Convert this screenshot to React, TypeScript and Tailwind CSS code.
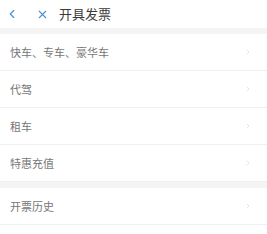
import { ChevronLeft, X, ChevronRight } from "lucide-react";

const groups = [["快车、专车、豪华车", "代驾", "租车", "特惠充值"], ["开票历史"]];

const Row = ({ label }: { label: string }) => (
  <div className="flex h-[37px] items-center justify-between border-b border-[#efefef] bg-white pl-[10px] pr-[15px]">
    <span className="text-[11px] text-[#777]">{label}</span>
    <ChevronRight size={8} strokeWidth={1.5} className="text-[#cccccc]" />
  </div>
);

export default function App() {
  return (
    <div
      className="h-[234px] w-[267px] overflow-hidden bg-white"
      style={{ fontFamily: '"Noto Sans CJK SC", "Noto Sans", sans-serif' }}
    >
      {/* HEADER */}
      <div className="flex h-[28px] items-center bg-white pl-[5px]">
        <ChevronLeft size={14} strokeWidth={2} className="text-[#4a8fd6]" />
        <X size={13} strokeWidth={2} className="ml-[17px] text-[#4a8fd6]" />
        <span className="ml-[10px] text-[13px] text-[#3a3a3a]">开具发票</span>
      </div>
      {/* LIST */}
      {groups.map((g, i) => (
        <div key={i}>
          <div className="h-[6px] bg-[#f4f4f4]" />
          {g.map((label) => (
            <Row key={label} label={label} />
          ))}
        </div>
      ))}
    </div>
  );
}
